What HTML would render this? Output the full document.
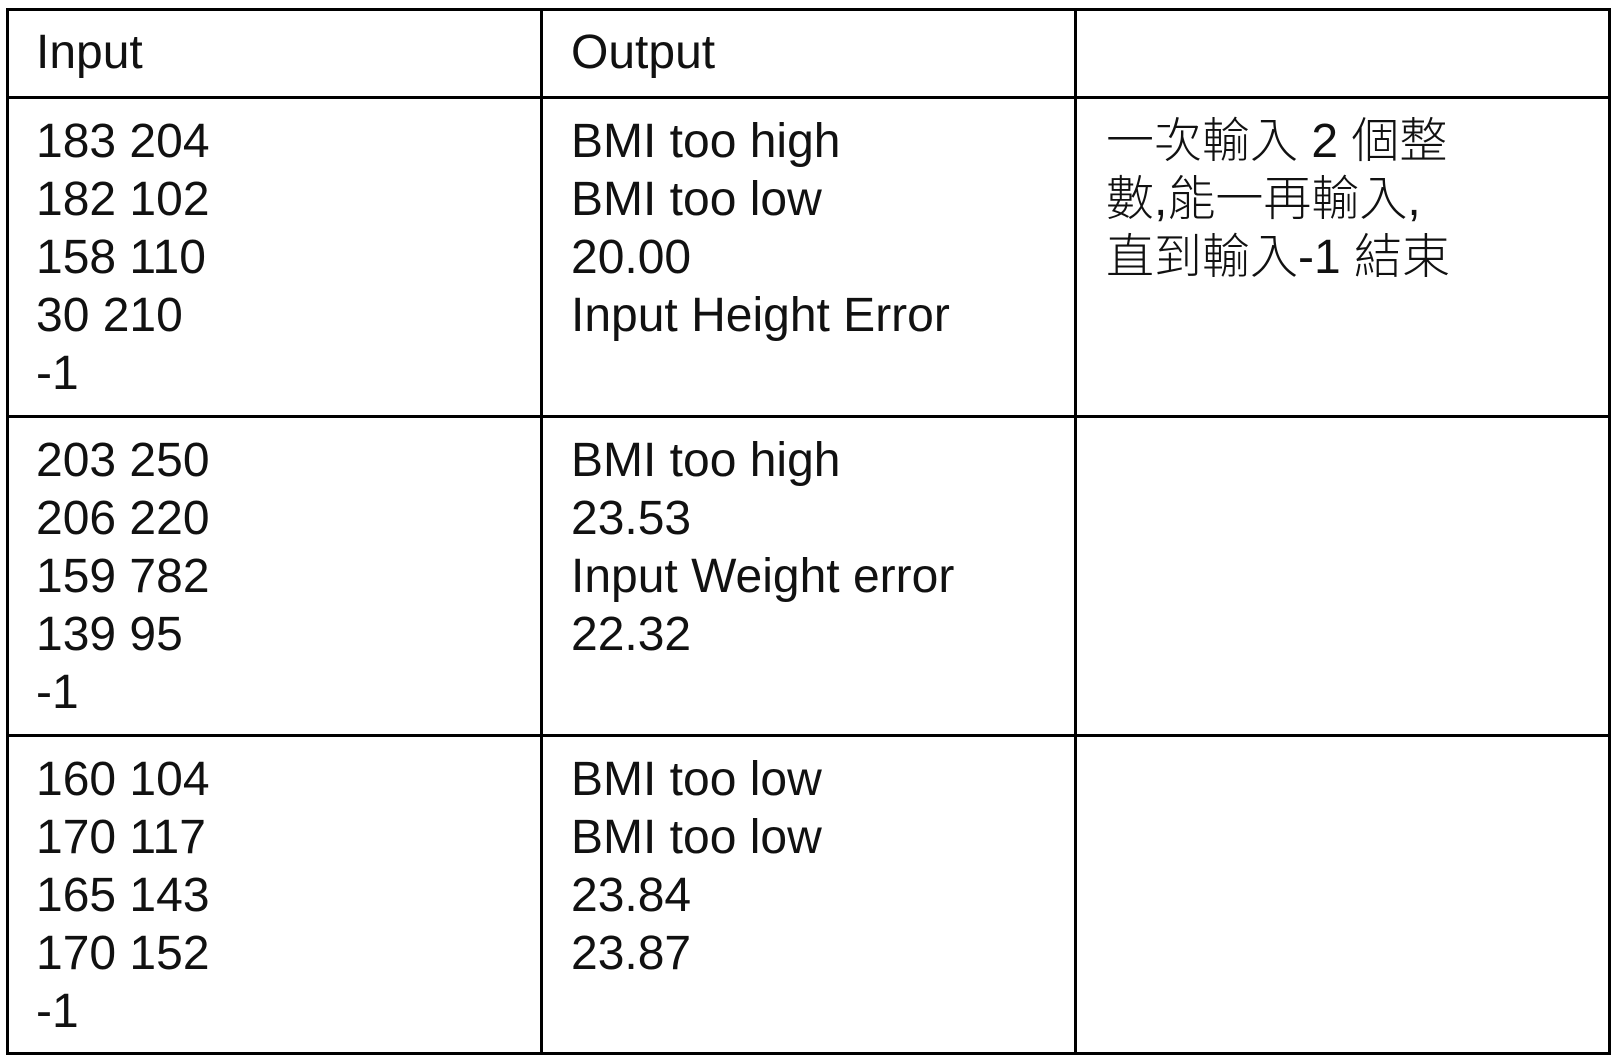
<!DOCTYPE html>
<html><head><meta charset="utf-8"><style>
html,body{margin:0;padding:0;background:#fff;width:1618px;height:1059px;overflow:hidden}
.h,.v{position:absolute;background:#000}
.h{height:3px}
.v{width:3px}
.t{position:absolute;font-family:"Liberation Sans","Noto Sans CJK TC",sans-serif;font-size:48px;line-height:58px;color:#111;white-space:pre}
</style></head><body>
<div class="h" style="left:6px;top:8px;width:1605px"></div>
<div class="h" style="left:6px;top:96px;width:1605px"></div>
<div class="h" style="left:6px;top:415px;width:1605px"></div>
<div class="h" style="left:6px;top:734px;width:1605px"></div>
<div class="h" style="left:6px;top:1052px;width:1605px"></div>
<div class="v" style="left:6px;top:8px;height:1047px"></div>
<div class="v" style="left:540px;top:8px;height:1047px"></div>
<div class="v" style="left:1074px;top:8px;height:1047px"></div>
<div class="v" style="left:1608px;top:8px;height:1047px"></div>

<div class="t" style="left:36px;top:24px">Input</div>
<div class="t" style="left:571px;top:24px">Output</div>

<div class="t" style="left:36px;top:113px">183 204
182 102
158 110
30 210
-1</div>
<div class="t" style="left:571px;top:113px">BMI too high
BMI too low
20.00
Input Height Error</div>
<div class="t" style="left:1106px;top:113px;font-weight:300">一次輸入 2 個整
數,能一再輸入,
直到輸入-1 結束</div>

<div class="t" style="left:36px;top:432px">203 250
206 220
159 782
139 95
-1</div>
<div class="t" style="left:571px;top:432px">BMI too high
23.53
Input Weight error
22.32</div>

<div class="t" style="left:36px;top:751px">160 104
170 117
165 143
170 152
-1</div>
<div class="t" style="left:571px;top:751px">BMI too low
BMI too low
23.84
23.87</div>
</body></html>
